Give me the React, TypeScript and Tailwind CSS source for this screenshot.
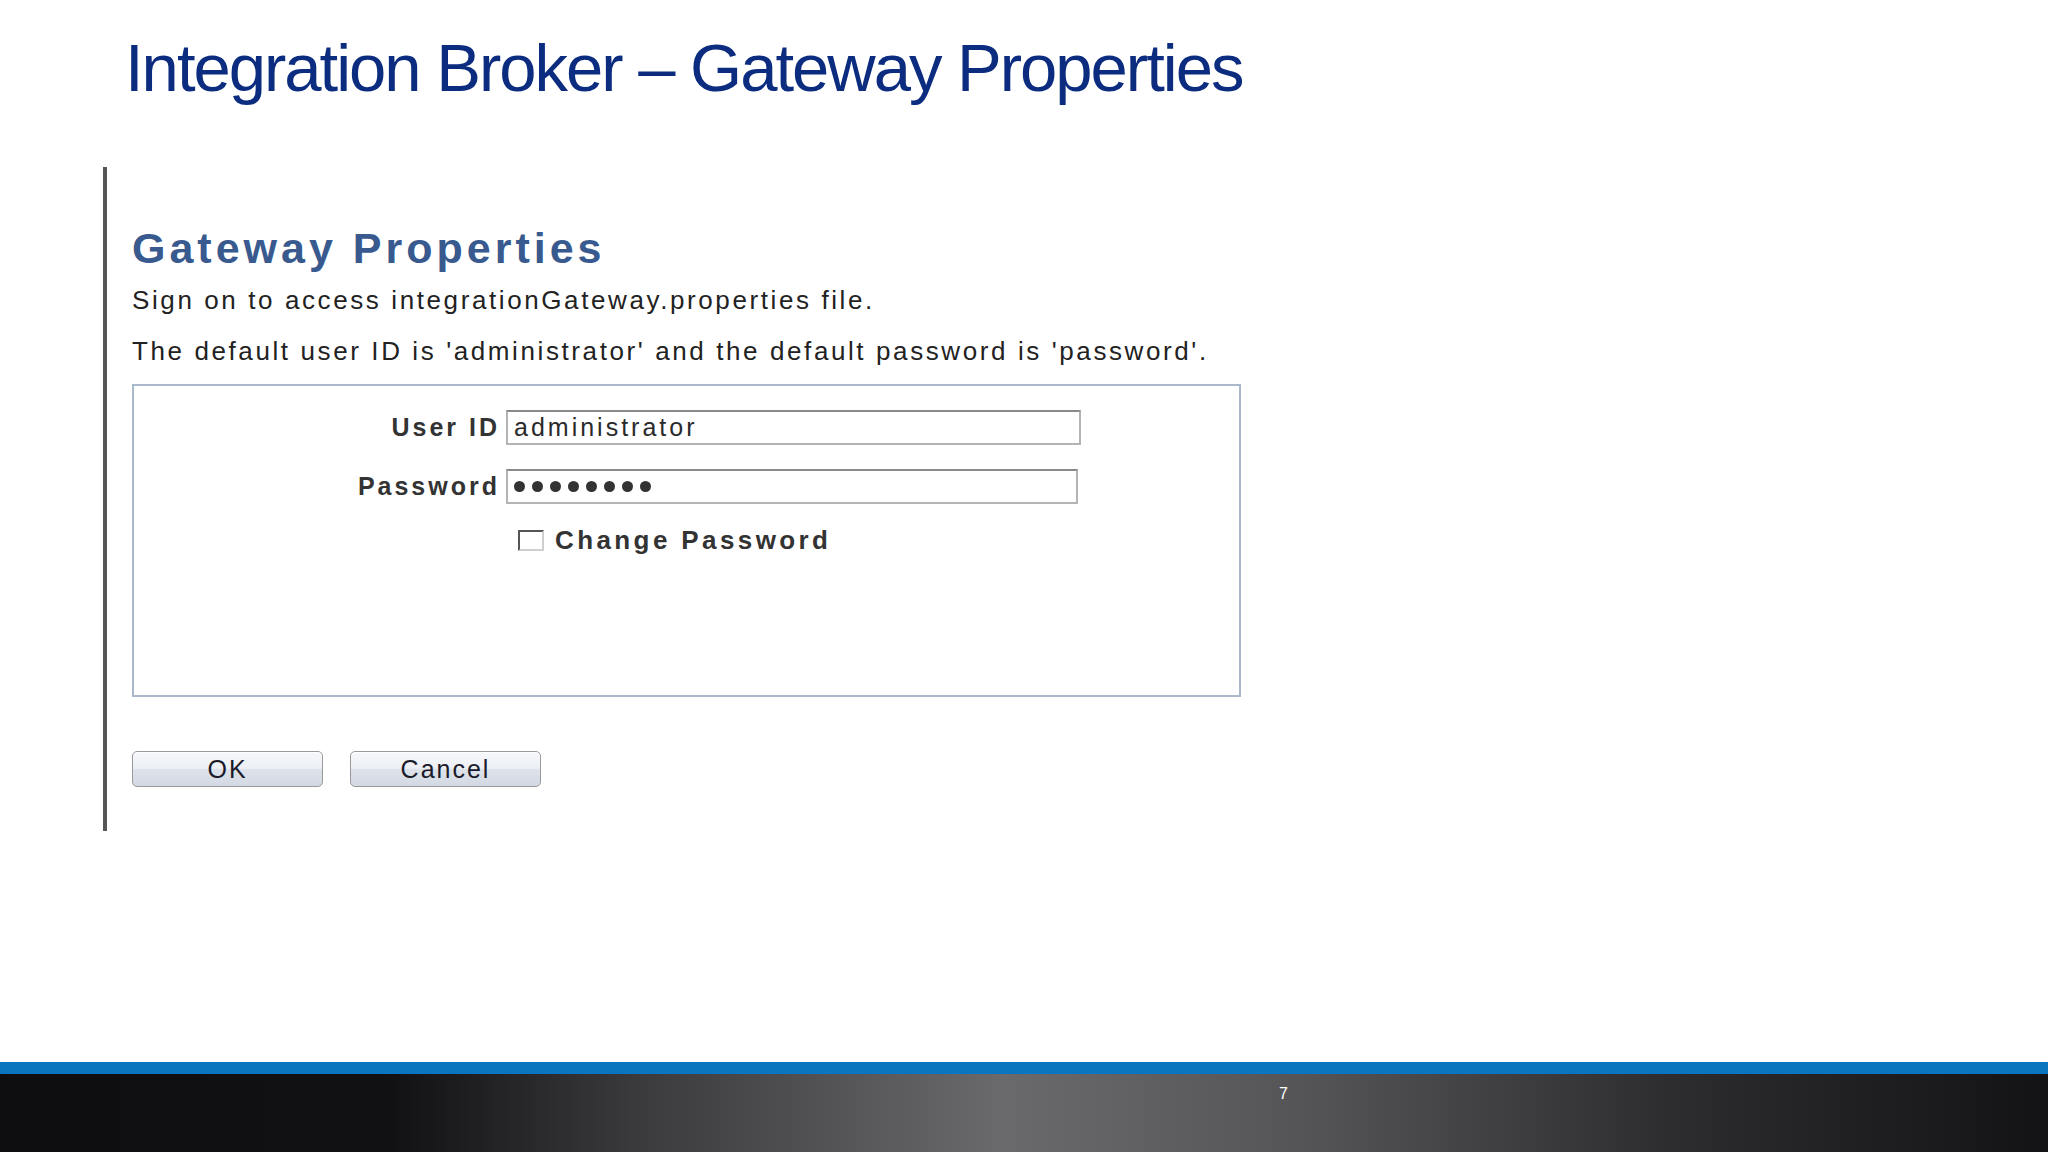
import React from 'react';

const formFont = { fontFamily: '"Liberation Sans", Arial, sans-serif' };

const Field: React.FC<{ label: string; value: string; secret?: boolean; width: string }> = ({ label, value, secret, width }) => (
  <div className="flex items-center">
    <div className="w-[372px] pr-[6px] text-right text-[25px] font-bold leading-none tracking-[3px] text-[#333]">{label}</div>
    <div
      className={`${width} h-[35px] flex items-center pl-[6px] border-2 border-[#b4b4b4] border-t-[#8a8a8a] bg-white text-[25px] leading-none tracking-[3px] text-[#2a2a2a]`}
    >
      {secret ? (
        <span className="flex gap-[7px]">
          {Array.from({ length: 8 }).map((_, i) => (
            <span key={i} className="w-[11px] h-[11px] rounded-full bg-[#333]" />
          ))}
        </span>
      ) : (
        value
      )}
    </div>
  </div>
);

const Btn: React.FC<{ label: string }> = ({ label }) => (
  <button className="w-[191px] h-[36px] rounded-[5px] border border-[#9a9a9a] bg-[linear-gradient(180deg,#f6f8fb_0%,#eceff5_48%,#dde2ea_52%,#d3d9e3_100%)] text-[25px] leading-none tracking-[2px] text-[#1a1a2a] shadow-[inset_0_1px_0_#ffffff]">
    {label}
  </button>
);

export default function App() {
  return (
    <div className="w-[2048px] h-[1152px] flex flex-col bg-white overflow-hidden" style={formFont}>
      {/* slide title */}
      <div className="pl-[125px] pt-[34px] h-[167px]">
        <h1 className="text-[67px] leading-none text-[#0b2c7f] tracking-[-2px]">Integration Broker – Gateway Properties</h1>
      </div>

      {/* embedded screenshot */}
      <div className="ml-[103px] h-[664px] border-l-4 border-[#555] pl-[25px] pt-[60px]">
        <h2 className="text-[43px] leading-none font-bold tracking-[4px] text-[#385a8e]">Gateway Properties</h2>
        <p className="mt-[17px] text-[26px] leading-none tracking-[2.6px] text-[#222]">
          Sign on to access integrationGateway.properties file.
        </p>
        <p className="mt-[25px] text-[26px] leading-none tracking-[2.6px] text-[#222]">
          The default user ID is 'administrator' and the default password is 'password'.
        </p>

        <div className="mt-[20px] w-[1109px] h-[313px] border-2 border-[#aab8cb] pt-[24px]">
          <div className="flex flex-col gap-[24px]">
            <Field label="User ID" value="administrator" width="w-[575px]" />
            <Field label="Password" value="" secret width="w-[572px]" />
          </div>
          <div className="mt-[23px] ml-[384px] flex items-center gap-[11px]">
            <span className="w-[26px] h-[21px] border-2 border-[#555] border-r-[#cfcfcf] border-b-[#cfcfcf] bg-white" />
            <span className="text-[26px] font-bold leading-none tracking-[3.4px] text-[#333]">Change Password</span>
          </div>
        </div>

        <div className="mt-[54px] flex gap-[27px]">
          <Btn label="OK" />
          <Btn label="Cancel" />
        </div>
      </div>

      <div className="flex-1" />

      {/* footer */}
      <div className="h-[12px] bg-[#0a76be]" />
      <div className="h-[78px] bg-[linear-gradient(90deg,#0e0e10_0%,#111113_19%,#3a3a3d_31%,#6a6a6c_49%,#545456_64%,#2c2c2e_82%,#131315_100%)] pl-[1279px] pt-[8px]">
        <span className="text-[16px] leading-none text-white">7</span>
      </div>
    </div>
  );
}
